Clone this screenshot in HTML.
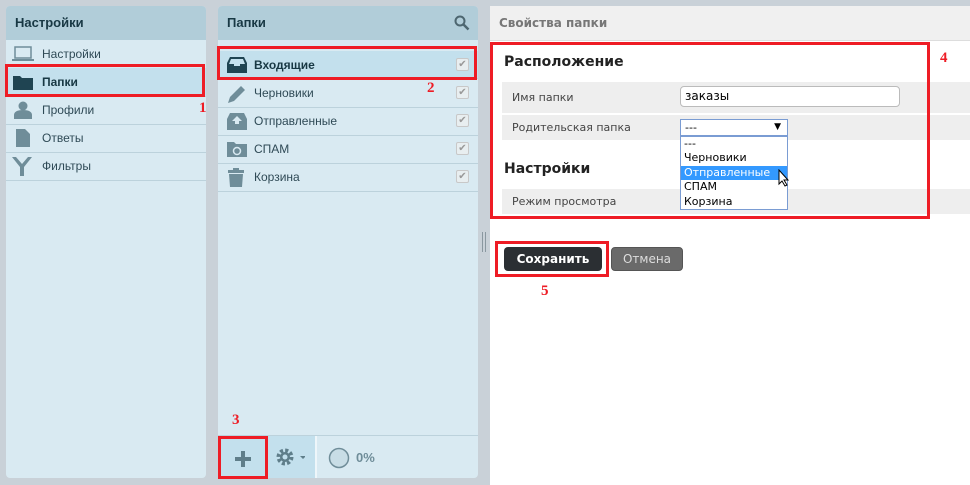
<!DOCTYPE html>
<html><head><meta charset="utf-8"><style>
body{margin:0;width:970px;height:485px;background:#c9d1d8;font-family:"Liberation Sans","DejaVu Sans",sans-serif;position:relative;overflow:hidden;font-size:12px}
.abs{position:absolute}
.panel{position:absolute;top:6px;height:472px;background:#d9eaf2;border-radius:4px;overflow:hidden}
.ph{height:34px;background:#b1cdd9;font-weight:bold;font-size:13px;color:#183844;line-height:34px;padding-left:9px}
.row{position:absolute;left:0;right:0;height:28px;border-bottom:1px solid #bcd2dc;color:#2f4a56;font-size:12px;line-height:28px}
.row span{position:absolute;left:36px}
.sel{background:#c3e0ed}
.red{position:absolute;border:3px solid #ee1c25;box-sizing:border-box}
.num{position:absolute;color:#ee1c25;font-family:"Liberation Serif",serif;font-weight:bold;font-size:15px}
.chk{position:absolute;right:9px;top:7px;width:11px;height:11px;border:1px solid #c8c8c8;background:#e8eef0;border-radius:2px;color:#999;font-size:10px;line-height:11px;text-align:center}
.fr{position:absolute;left:12px;right:0;background:#eeeeee;color:#444;font-size:11px;font-family:"DejaVu Sans",sans-serif}
.dd{font-family:"DejaVu Sans",sans-serif}
</style></head><body>

<div class="panel" style="left:6px;width:200px">
<div class="ph">Настройки</div>
<div class="row" style="top:34px"><svg class="abs" style="left:6px;top:6px" width="22" height="16"><rect x="3" y="1" width="16" height="11" fill="none" stroke="#6f8d99" stroke-width="1.5"/><rect x="0" y="13" width="22" height="2" fill="#6f8d99"/></svg><span>Настройки</span></div>
<div class="row sel" style="top:62px;font-weight:bold;color:#183844"><svg class="abs" style="left:7px;top:7px" width="20" height="15"><path d="M0 1h7l2 2h11v12H0z" fill="#1f4452"/></svg><span>Папки</span></div>
<div class="row" style="top:90px"><svg class="abs" style="left:8px;top:5px" width="18" height="18"><circle cx="9" cy="5" r="4.5" fill="#6f8d99"/><path d="M0 18v-4c0-3 3-5 9-5s9 2 9 5v4z" fill="#6f8d99"/></svg><span>Профили</span></div>
<div class="row" style="top:118px"><svg class="abs" style="left:10px;top:5px" width="14" height="18"><path d="M0 0h9l5 5v13H0z" fill="#6f8d99"/></svg><span>Ответы</span></div>
<div class="row" style="top:146px"><svg class="abs" style="left:6px;top:5px" width="20" height="20"><path d="M0 0l8 10v9h4v-9l8-10-4 0-6 7-6-7z" fill="#6f8d99"/></svg><span>Фильтры</span></div>
</div>

<div class="panel" style="left:218px;width:260px">
<div class="ph">Папки</div>
<svg class="abs" style="left:236px;top:9px" width="16" height="16"><circle cx="6" cy="6" r="4.5" fill="none" stroke="#4d6670" stroke-width="2"/><path d="M9.5 9.5l5 5" stroke="#4d6670" stroke-width="2.5"/></svg>
<div class="row sel" style="top:45px;font-weight:bold;color:#183844;height:27px"><svg class="abs" style="left:9px;top:6px" width="20" height="16"><path d="M0 6l3-6h14l3 6v10H0z" fill="#1f4452"/><path d="M4 2h12l2 5h-5v2h-6v-2H2z" fill="#c3e0ed"/></svg><span>Входящие</span><div class="chk">✔</div></div>
<div class="row" style="top:73px"><svg class="abs" style="left:9px;top:5px" width="20" height="20"><path d="M1 19l2-6 11-11 4 4-11 11z" fill="#6f8d99"/></svg><span>Черновики</span><div class="chk">✔</div></div>
<div class="row" style="top:101px"><svg class="abs" style="left:9px;top:6px" width="20" height="17"><path d="M0 6l3-6h14l3 6v11H0z" fill="#6f8d99"/><path d="M10 3l-5 5h3v3h4v-3h3z" fill="#d9eaf2"/></svg><span>Отправленные</span><div class="chk">✔</div></div>
<div class="row" style="top:129px"><svg class="abs" style="left:9px;top:6px" width="20" height="16"><path d="M0 1h7l2 2h11v13H0z" fill="#6f8d99"/><circle cx="10" cy="10" r="3.5" fill="none" stroke="#d9eaf2" stroke-width="1.5"/></svg><span>СПАМ</span><div class="chk">✔</div></div>
<div class="row" style="top:157px"><svg class="abs" style="left:10px;top:5px" width="16" height="19"><rect x="0" y="2" width="16" height="3" fill="#6f8d99"/><rect x="5" y="0" width="6" height="3" fill="#6f8d99"/><path d="M1 6h14l-1 13H2z" fill="#6f8d99"/></svg><span>Корзина</span><div class="chk">✔</div></div>
<div class="abs" style="left:0;right:0;top:429px;height:1px;background:#bcd2dc"></div>
<div class="abs" style="left:0;top:430px;width:97px;height:42px;background:#c3e0ed"></div>
<div class="abs" style="left:97px;top:430px;width:2px;height:42px;background:#eef6fa"></div>
<svg class="abs" style="left:17px;top:445px" width="16" height="16"><path d="M6 0h4v6h6v4h-6v6H6v-6H0V6h6z" fill="#5f7e8a"/></svg>
<svg class="abs" style="left:57px;top:441px" width="30" height="20"><circle cx="10" cy="10" r="6.5" fill="none" stroke="#5f7e8a" stroke-width="4" stroke-dasharray="3 2.1"/><circle cx="10" cy="10" r="5" fill="#5f7e8a"/><circle cx="10" cy="10" r="2.5" fill="#c3e0ed"/><path d="M25 9h6l-3 3z" fill="#5f7e8a"/></svg>
<svg class="abs" style="left:110px;top:441px" width="22" height="22"><circle cx="11" cy="11" r="9.5" fill="#c8dde6" stroke="#6f8d99" stroke-width="1.5"/></svg>
<div class="abs" style="left:138px;top:444px;font-weight:bold;font-size:13px;color:#6f8d99">0%</div>
</div>

<div class="abs" style="left:482px;top:232px;width:1px;height:20px;background:#8a98a0"></div>
<div class="abs" style="left:485px;top:232px;width:1px;height:20px;background:#8a98a0"></div>

<div class="abs" style="left:490px;top:6px;width:480px;height:479px;background:#fff">
<div class="dd" style="height:34px;background:#f0f0f0;border-bottom:1px solid #ddd;color:#777;font-weight:bold;font-size:12px;line-height:34px;padding-left:9px">Свойства папки</div>
<div class="abs dd" style="left:14px;top:48px;font-weight:bold;font-size:14px;color:#222">Расположение</div>
<div class="fr" style="top:76px;height:31px"><span class="abs" style="left:10px;top:9px">Имя папки</span></div>
<div class="abs dd" style="left:190px;top:80px;height:21px;border:1px solid #bbb;border-radius:4px;background:#fff;font-size:12px;line-height:19px;padding-left:4px;box-sizing:border-box;width:220px">заказы</div>
<div class="fr" style="top:109px;height:25px"><span class="abs" style="left:10px;top:6px">Родительская папка</span></div>
<div class="abs dd" style="left:190px;top:113px;width:108px;height:17px;border:1px solid #7a9cd3;background:#fff;box-sizing:border-box;font-size:11px;line-height:15px;padding-left:4px">---<span class="abs" style="right:6px;top:0;font-size:9px">▼</span></div>
<div class="abs dd" style="left:14px;top:155px;font-weight:bold;font-size:14px;color:#222">Настройки</div>
<div class="fr" style="top:183px;height:25px"><span class="abs" style="left:10px;top:6px">Режим просмотра</span></div>
<div class="abs dd" style="left:190px;top:130px;width:108px;height:74px;border:1px solid #7a9cd3;background:#fff;box-sizing:border-box;font-size:11px;line-height:14.4px">
<div style="padding-left:3px">---</div><div style="padding-left:3px">Черновики</div><div style="padding-left:3px;background:#3399ff;color:#fff">Отправленные</div><div style="padding-left:3px">СПАМ</div><div style="padding-left:3px">Корзина</div></div>
<svg class="abs" style="left:288px;top:163px" width="12" height="18"><path d="M1 1v14l3-3 3 5 2-1-3-5h4z" fill="#fff" stroke="#000"/></svg>
<div class="abs dd" style="left:14px;top:241px;width:98px;height:24px;background:#2b2f33;border-radius:4px;color:#fff;font-weight:bold;font-size:12px;line-height:24px;text-align:center">Сохранить</div>
<div class="abs dd" style="left:121px;top:241px;width:72px;height:24px;background:#6a6a6a;border:1px solid #555;box-sizing:border-box;border-radius:4px;color:#ddd;font-size:12px;line-height:22px;text-align:center">Отмена</div>
</div>

<div class="red" style="left:5px;top:64px;width:200px;height:33px"></div>
<div class="red" style="left:217px;top:46px;width:260px;height:34px"></div>
<div class="red" style="left:218px;top:436px;width:50px;height:43px"></div>
<div class="red" style="left:490px;top:42px;width:440px;height:177px"></div>
<div class="red" style="left:495px;top:241px;width:114px;height:36px"></div>
<div class="num" style="left:199px;top:100px">1</div>
<div class="num" style="left:427px;top:80px">2</div>
<div class="num" style="left:232px;top:412px">3</div>
<div class="num" style="left:940px;top:50px">4</div>
<div class="num" style="left:541px;top:283px">5</div>
</body></html>
